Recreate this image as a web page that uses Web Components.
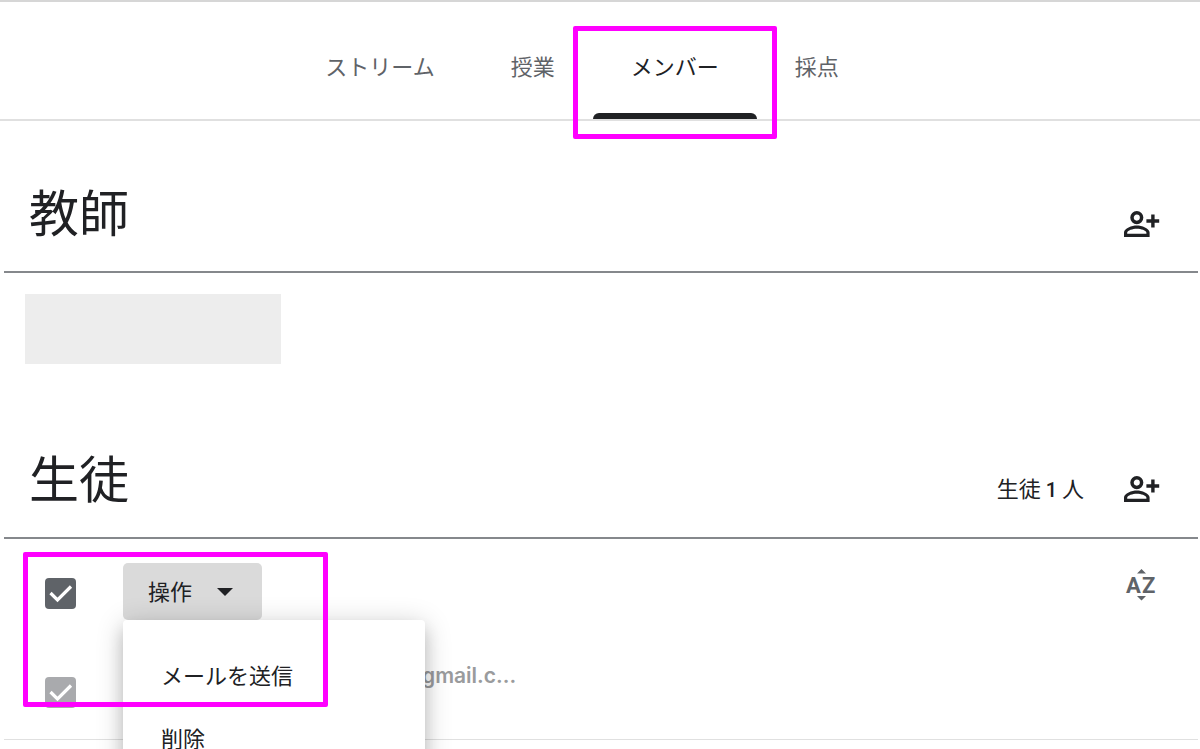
<!DOCTYPE html>
<html lang="ja">
<head>
<meta charset="utf-8">
<title>メンバー</title>
<style>
  html, body { margin: 0; }
  body {
    --ink: #202124;
    --muted: #5f6368;
    --line: #e0e0e0;
    --mark: #ff00ff;
    background: #fff;
    color: var(--ink);
    font: 22px/32px "Noto Sans CJK JP", sans-serif;
  }
</style>
</head>
<body>
<class-page></class-page>

<script>
const define = (name, html, setup) => {
  const template = document.createElement('template');
  template.innerHTML = html;
  customElements.define(name, class extends HTMLElement {
    constructor() {
      super();
      this.attachShadow({ mode: 'open' }).append(template.content.cloneNode(true));
    }
    connectedCallback() { if (setup) setup(this, this.shadowRoot); }
  });
};

define('mark-frame', `
  <style>
    :host { display: block; position: absolute; z-index: 5; box-sizing: border-box;
      border: 5px solid var(--mark); border-radius: 2px; pointer-events: none; }
  </style>`);

define('nav-tab', `
  <style>
    :host { display: flex; position: relative; }
    a { display: flex; align-items: center; padding: 24px 38px 15px; color: var(--muted); text-decoration: none; white-space: nowrap; }
    :host([current]) a { color: var(--ink); }
    :host([current]) a::after { content: ""; position: absolute; left: 0; right: 0; bottom: 0;
      height: 6px; border-radius: 6px 6px 0 0; background: var(--ink); }
    ::slotted(mark-frame) { inset: 24px -20px -20px; }
  </style>
  <a href="#"><slot></slot></a><slot name="mark"></slot>`,
  (host, root) => { if (host.hasAttribute('current')) root.querySelector('a').setAttribute('aria-current', 'page'); });

define('tab-bar', `
  <style>
    :host { display: block; border-top: 2px solid #d6d6d6; border-bottom: 2px solid var(--line); }
    nav { display: flex; justify-content: center; height: 117px; padding-right: 36px; }
  </style>
  <nav><slot></slot></nav>`);

define('add-person', `
  <style>
    :host { display: block; }
    button { display: block; padding: 0; border: 0; background: none; color: var(--ink); cursor: pointer; }
    svg { display: block; }
  </style>
  <button type="button" aria-label="招待">
    <svg width="36" height="27" viewBox="0 0 36 27" fill="currentColor">
      <circle cx="12.8" cy="6.6" r="4.800" fill="none" stroke="currentColor" stroke-width="3.500"/>
      <path fill-rule="evenodd" d="M0 26V21.6C0 17 8 14.4 12.8 14.4S25.6 17 25.6 21.6V26ZM3.200 22.700H22.4V21.6C22 19.4 17 17.7 12.8 17.7S3.600 19.4 3.200 21.6Z"/>
      <path d="M27.200 3.500h3.400v4.800H35.200v3.400h-4.600v4.800h-3.400v-4.800h-4.800v-3.400h4.800z"/>
    </svg>
  </button>`);

define('section-head', `
  <style>
    :host { display: flex; align-items: center; gap: 40px; padding: 25px 38px 31px 25px; border-bottom: 2px solid #85888c; }
    h2 { flex: 1; margin: 0; font-size: 50px; line-height: 60px; font-weight: 400; }
    ::slotted([slot=count]) { margin-top: 26px; }
    add-person { margin-top: 28px; }
  </style>
  <h2><slot></slot></h2><slot name="count"></slot><add-person></add-person>`);

define('check-box', `
  <style>
    :host { display: block; width: 31px; height: 31px; }
    input { appearance: none; display: block; width: 31px; height: 31px; margin: 0; border-radius: 4px; background: var(--muted); }
    input:checked { background-image: url("data:image/svg+xml,%3Csvg xmlns='http://www.w3.org/2000/svg' viewBox='0 0 31 31'%3E%3Cpath d='M5.500 15l7 7L26 8.500' fill='none' stroke='white' stroke-width='3.200'/%3E%3C/svg%3E"); }
    input:disabled { background-color: #a9aaad; }
  </style>
  <input type="checkbox" checked>`,
  (host, root) => {
    const input = root.querySelector('input');
    input.setAttribute('aria-label', host.getAttribute('label'));
    input.disabled = host.hasAttribute('disabled');
  });

define('action-menu', `
  <style>
    :host { display: block; position: relative; }
    .open { display: flex; align-items: center; gap: 25px; height: 57px; padding: 0 29px 2px 25px;
      border: 0; border-radius: 5px; background: #dadada; color: var(--ink); font: inherit; }
    .open svg { margin-top: 4px; }
    ul { position: absolute; z-index: 2; top: 100%; left: 0; width: 302px; box-sizing: border-box;
      margin: 0; padding: 23px 0; list-style: none; background: #fff; border-radius: 4px;
      box-shadow: 0 10px 16px rgba(0,0,0,.14), 0 4px 28px rgba(0,0,0,.2); }
    li button { display: block; width: 100%; height: 63px; padding: 0 38px; border: 0;
      background: none; color: var(--ink); font: inherit; text-align: left; }
  </style>
  <button class="open" type="button" aria-haspopup="true" aria-expanded="true">操作
    <svg width="16" height="8" viewBox="0 0 16 8" fill="currentColor"><path d="M0 0h16L8 8z"/></svg>
  </button>
  <ul>
    <li><button type="button">メールを送信</button></li>
    <li><button type="button">削除</button></li>
  </ul>`);

define('sort-button', `
  <style>
    :host { display: block; }
    button { display: block; padding: 0; border: 0; background: none; color: var(--muted); }
    svg { display: block; }
    text { font: 700 22px Roboto, sans-serif; }
  </style>
  <button type="button" aria-label="並べ替え">
    <svg width="32" height="32" viewBox="0 0 32 32" fill="currentColor">
      <path d="M12 4.500 16.500 0 21 4.500zM12 27h9L16.500 31.500z"/>
      <text x="1" y="24">A</text><text x="17" y="24">Z</text>
    </svg>
  </button>`);

define('student-list', `
  <style>
    :host { display: block; position: relative; border-bottom: 1px solid var(--line); }
    .tools, .row { display: flex; padding: 0 41px; }
    .tools { align-items: center; gap: 47px; height: 108px; }
    .row { gap: 346px; height: 92px; }
    action-menu { margin: 0 auto 4px 0; }
    sort-button { margin-bottom: 16px; }
    .email { color: #9a9b9d; font: 600 21px/32px Inter, sans-serif; margin-top: 13px; }
    .row check-box { margin-top: 30px; }
    mark-frame { left: 19px; top: 13px; width: 305px; height: 155px; }
  </style>
  <div class="tools">
    <check-box label="すべての生徒を選択"></check-box>
    <action-menu></action-menu>
    <sort-button></sort-button>
  </div>
  <div class="row">
    <check-box label="生徒を選択" disabled></check-box>
    <span class="email">gmail.c...</span>
  </div>
  <mark-frame></mark-frame>`);

define('class-page', `
  <style>
    :host { display: block; min-height: 100vh; overflow: clip; }
    main { padding: 34px 2px 0 4px; }
    .teacher { width: 256px; height: 70px; margin: 21px 21px 56px; background: #ededed; }
    b { font: 500 20px/32px Roboto, sans-serif; }
  </style>
  <tab-bar>
    <nav-tab>ストリーム</nav-tab>
    <nav-tab>授業</nav-tab>
    <nav-tab current>メンバー<mark-frame slot="mark"></mark-frame></nav-tab>
    <nav-tab>採点</nav-tab>
  </tab-bar>
  <main>
    <section>
      <section-head>教師</section-head>
      <div class="teacher"></div>
    </section>
    <section>
      <section-head>生徒<span slot="count">生徒 <b>1</b> 人</span></section-head>
      <student-list></student-list>
    </section>
  </main>`);
</script>
</body>
</html>
